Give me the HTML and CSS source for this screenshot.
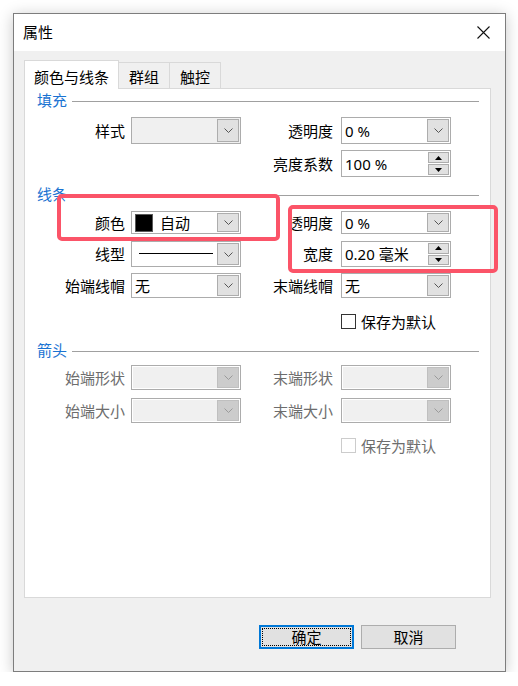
FILE: index.html
```html
<!DOCTYPE html>
<html lang="zh-CN">
<head>
<meta charset="UTF-8">
<meta name="viewport" content="width=device-width, initial-scale=1.0">
<title>属性</title>
<link rel="stylesheet" href="styles.css">
</head>
<body>

<div class="dialog">
    <div class="titlebar">
        <span class="title">属性</span>
        <svg class="close" width="13" height="13" viewBox="0 0 13 13">
            <path d="M0.5 0.5 L12.5 12.5 M12.5 0.5 L0.5 12.5" stroke="#111" stroke-width="1.1" fill="none"/>
        </svg>
    </div>

    <div class="dialog-body">
        <div class="tabs">
            <div class="tab active">颜色与线条</div>
            <div class="tab">群组</div>
            <div class="tab">触控</div>
        </div>

        <div class="panel">
            <!-- 填充 -->
            <div class="group-head"><span>填充</span><i></i></div>
            <div class="grid fill-grid">
                <label class="lbl">样式</label>
                <div class="combo readonly"><span class="value"></span><span class="drop"><svg width="9" height="5" viewBox="0 0 9 5"><polyline points="0.5,0.5 4.5,4.5 8.5,0.5" fill="none" stroke="#555"/></svg></span></div>
                <label class="lbl lbl-r">透明度</label>
                <div class="combo"><span class="value">0 %</span><span class="drop"><svg width="9" height="5" viewBox="0 0 9 5"><polyline points="0.5,0.5 4.5,4.5 8.5,0.5" fill="none" stroke="#555"/></svg></span></div>

                <span></span><span></span>
                <label class="lbl lbl-r">亮度系数</label>
                <div class="combo spin"><span class="value">100 %</span>
                    <span class="arrows">
                        <b><svg width="7" height="4" viewBox="0 0 7 4"><polygon points="3.5,0 7,4 0,4" fill="#000"/></svg></b>
                        <b><svg width="7" height="4" viewBox="0 0 7 4"><polygon points="0,0 7,0 3.5,4" fill="#000"/></svg></b>
                    </span>
                </div>
            </div>

            <!-- 线条 -->
            <div class="group-head line-head"><span>线条</span><i></i></div>
            <div class="grid line-grid">
                <label class="lbl">颜色</label>
                <div class="combo"><span class="value"><em class="swatch"></em>自动</span><span class="drop"><svg width="9" height="5" viewBox="0 0 9 5"><polyline points="0.5,0.5 4.5,4.5 8.5,0.5" fill="none" stroke="#555"/></svg></span></div>
                <label class="lbl lbl-r">透明度</label>
                <div class="combo"><span class="value">0 %</span><span class="drop"><svg width="9" height="5" viewBox="0 0 9 5"><polyline points="0.5,0.5 4.5,4.5 8.5,0.5" fill="none" stroke="#555"/></svg></span></div>

                <label class="lbl">线型</label>
                <div class="combo"><span class="value"><em class="stroke"></em></span><span class="drop"><svg width="9" height="5" viewBox="0 0 9 5"><polyline points="0.5,0.5 4.5,4.5 8.5,0.5" fill="none" stroke="#555"/></svg></span></div>
                <label class="lbl lbl-r">宽度</label>
                <div class="combo spin"><span class="value">0.20 毫米</span>
                    <span class="arrows">
                        <b><svg width="7" height="4" viewBox="0 0 7 4"><polygon points="3.5,0 7,4 0,4" fill="#000"/></svg></b>
                        <b><svg width="7" height="4" viewBox="0 0 7 4"><polygon points="0,0 7,0 3.5,4" fill="#000"/></svg></b>
                    </span>
                </div>

                <label class="lbl">始端线帽</label>
                <div class="combo"><span class="value">无</span><span class="drop"><svg width="9" height="5" viewBox="0 0 9 5"><polyline points="0.5,0.5 4.5,4.5 8.5,0.5" fill="none" stroke="#555"/></svg></span></div>
                <label class="lbl lbl-r">末端线帽</label>
                <div class="combo"><span class="value">无</span><span class="drop"><svg width="9" height="5" viewBox="0 0 9 5"><polyline points="0.5,0.5 4.5,4.5 8.5,0.5" fill="none" stroke="#555"/></svg></span></div>
            </div>
            <div class="check-row first-check">
                <span class="box"></span><span>保存为默认</span>
            </div>

            <!-- 箭头 (disabled) -->
            <div class="group-head arrow-head"><span>箭头</span><i></i></div>
            <div class="grid arrow-grid off">
                <label class="lbl">始端形状</label>
                <div class="combo disabled"><span class="value"></span><span class="drop"><svg width="9" height="5" viewBox="0 0 9 5"><polyline points="0.5,0.5 4.5,4.5 8.5,0.5" fill="none" stroke="#9a9a9a"/></svg></span></div>
                <label class="lbl lbl-r">末端形状</label>
                <div class="combo disabled"><span class="value"></span><span class="drop"><svg width="9" height="5" viewBox="0 0 9 5"><polyline points="0.5,0.5 4.5,4.5 8.5,0.5" fill="none" stroke="#9a9a9a"/></svg></span></div>

                <label class="lbl">始端大小</label>
                <div class="combo disabled"><span class="value"></span><span class="drop"><svg width="9" height="5" viewBox="0 0 9 5"><polyline points="0.5,0.5 4.5,4.5 8.5,0.5" fill="none" stroke="#9a9a9a"/></svg></span></div>
                <label class="lbl lbl-r">末端大小</label>
                <div class="combo disabled"><span class="value"></span><span class="drop"><svg width="9" height="5" viewBox="0 0 9 5"><polyline points="0.5,0.5 4.5,4.5 8.5,0.5" fill="none" stroke="#9a9a9a"/></svg></span></div>
            </div>
            <div class="check-row off second-check">
                <span class="box"></span><span>保存为默认</span>
            </div>
        </div>

        <div class="buttons">
            <button class="btn default"><span>确定</span></button>
            <button class="btn">取消</button>
        </div>
    </div>

    <!-- red marks drawn over the form -->
    <div class="mark mark-color"></div>
    <div class="mark mark-width"></div>
</div>

</body>
</html>
```

FILE: styles.css
```css
body {
    margin: 0;
    background-color: #ffffff;
    font-family: "Noto Sans", "Noto Sans CJK SC", sans-serif;
    font-size: 15px;
    color: #000;
}

.dialog {
    position: relative;
    width: 491px;
    height: 657px;
    margin: 13px 0 0 13px;
    border: 1px solid #7d7d7d;
    background-color: #f0f0f0;
    box-shadow: 0 2px 14px rgba(0, 0, 0, 0.22);
}

.titlebar {
    height: 37px;
    background-color: #ffffff;
    display: flex;
    align-items: center;
    justify-content: space-between;
    padding: 0 15px 0 9px;
}
.title {
    line-height: 20px;
    margin-top: -1px;
}
.close {
    margin-top: -1px;
}

.dialog-body {
    padding: 9px 0 0 10px;
}

/* tabs */
.tabs {
    display: flex;
    align-items: flex-end;
    height: 28px;
}
.tab {
    height: 26px;
    box-sizing: border-box;
    padding: 4px 10px 0 10px;
    line-height: 20px;
    border: 1px solid #d9d9d9;
    border-bottom: none;
    border-left: none;
    background-color: #f0f0f0;
}
.tab.active {
    height: 29px;
    margin-bottom: -1px;
    position: relative;
    padding: 6px 9px 0 9px;
    background-color: #ffffff;
    border-left: 1px solid #d9d9d9;
}

.panel {
    width: 467px;
    height: 510px;
    box-sizing: border-box;
    border: 1px solid #d9d9d9;
    background-color: #ffffff;
    padding: 1px 11px 0 12px;
}

.group-head {
    display: flex;
    align-items: center;
    height: 20px;
    color: #1a73d2;
    line-height: 20px;
}
.group-head i {
    flex: 1;
    height: 0;
    border-top: 1px solid #a0a0a0;
    margin-left: 5px;
    margin-top: 2px;
}
.line-head { margin-top: 7px; }
.arrow-head { margin-top: 11px; }

/* form grid: label | field | label | field */
.grid {
    display: grid;
    grid-template-columns: 94px 110px 100px 110px;
}
.fill-grid {
    margin-top: 7px;
    grid-template-rows: 27px 27px;
    row-gap: 6px;
}
.line-grid {
    margin-top: 7px;
    grid-template-rows: 24px 26px 25px;
    row-gap: 6px;
}
.line-grid > :nth-child(-n+4) { margin-bottom: 1px; }
.arrow-grid {
    margin-top: 5px;
    grid-template-rows: 25px 25px;
    row-gap: 8px;
}

.lbl {
    text-align: right;
    padding-right: 6px;
    align-self: center;
    line-height: 20px;
    white-space: nowrap;
}
.lbl-r {
    padding-right: 8px;
}
.off .lbl,
.off.check-row {
    color: #6d6d6d;
}

/* combo box */
.combo {
    display: flex;
    align-items: stretch;
    border: 1px solid #acacac;
    background-color: #ffffff;
    box-sizing: border-box;
}
.combo .value {
    flex: 1;
    display: flex;
    align-items: center;
    padding-left: 3px;
    line-height: 20px;
    white-space: nowrap;
}
.combo .drop {
    width: 20px;
    margin: 1px;
    border: 1px solid #adadad;
    background-color: #e1e1e1;
    display: flex;
    align-items: center;
    justify-content: center;
}
.combo.readonly {
    background-color: #f0f0f0;
}
.combo.disabled {
    background-color: #f0f0f0;
    box-shadow: inset 0 0 0 1px #ffffff;
}
.combo.disabled .drop {
    background-color: #cccccc;
    border-color: #bfbfbf;
}

.swatch {
    display: inline-block;
    width: 16px;
    height: 16px;
    border: 1px solid #5a5a5a;
    background-color: #000;
    margin-right: 7px;
}
.stroke {
    display: block;
    width: 74px;
    height: 0;
    border-top: 1px solid #000;
    margin-left: 4px;
    margin-top: -2px;
}

/* spinner */
.spin .arrows {
    width: 21px;
    margin: 1px;
    display: flex;
    flex-direction: column;
    gap: 1px;
}
.spin .arrows b {
    flex: 1;
    border: 1px solid #adadad;
    background-color: #e1e1e1;
    display: flex;
    align-items: center;
    justify-content: center;
}

/* checkbox */
.check-row {
    display: flex;
    align-items: center;
    height: 15px;
    margin-left: 304px;
    line-height: 20px;
}
.check-row .box {
    width: 13px;
    height: 13px;
    border: 1px solid #333333;
    background-color: #fff;
    margin-right: 5px;
}
.check-row.off .box {
    border-color: #cccccc;
}
.first-check { margin-top: 16px; }
.second-check { margin-top: 15px; }

/* bottom buttons */
.buttons {
    display: flex;
    justify-content: flex-end;
    gap: 7px;
    margin-top: 27px;
    padding-right: 49px;
}
.btn {
    width: 95px;
    height: 24px;
    box-sizing: border-box;
    border: 1px solid #adadad;
    background-color: #e1e1e1;
    font-family: "Noto Sans CJK SC", sans-serif;
    font-size: 15px;
    line-height: 18px;
    padding: 0;
    color: #000;
}
.btn.default {
    border: 2px solid #0078d7;
    padding: 1px;
}
.btn.default span {
    display: block;
    height: 100%;
    box-sizing: border-box;
    outline: 1px dotted #000;
    outline-offset: -1px;
    line-height: 18px;
}

/* highlight marks */
.mark {
    position: absolute;
    border: 4px solid #fb5468;
    border-radius: 5px;
    box-sizing: border-box;
}
.mark-color {
    left: 43px;
    top: 180px;
    width: 223px;
    height: 47px;
}
.mark-width {
    left: 274px;
    top: 191px;
    width: 210px;
    height: 68px;
}
```
